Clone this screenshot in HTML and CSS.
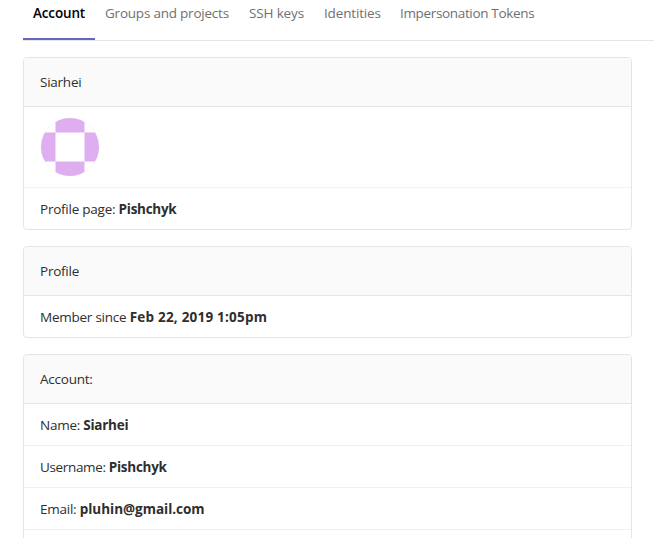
FILE: index.html
```html
<!DOCTYPE html>
<html lang="en">
<head>
<meta charset="utf-8">
<title>Account</title>
<link rel="stylesheet" href="styles.css">
</head>
<body>
<nav class="tabs">
  <a class="tab active">Account</a>
  <a class="tab groups">Groups and projects</a>
  <a class="tab keys">SSH keys</a>
  <a class="tab identities">Identities</a>
  <a class="tab tokens">Impersonation Tokens</a>
</nav>
<main>
  <section class="card">
    <header>Siarhei</header>
    <div class="avatar-row">
      <svg class="avatar" viewBox="0 0 60 60" width="60" height="60">
        <clipPath id="round"><circle cx="30" cy="30" r="29"/></clipPath>
        <circle cx="30" cy="30" r="29" fill="none" stroke="#f7f7f7"/>
        <g clip-path="url(#round)" fill="#deaef0">
          <path d="M15.5 0H44.5V15.5H15.5ZM0 15.5H15.5V44.5H0ZM44.5 15.5H60V44.5H44.5ZM15.5 44.5H44.5V60H15.5Z"/>
        </g>
      </svg>
    </div>
    <div class="row">Profile page: <b>Pishchyk</b></div>
  </section>
  <section class="card">
    <header>Profile</header>
    <div class="row">Member since <b class="date">Feb 22, 2019 1:05pm</b></div>
  </section>
  <section class="card">
    <header>Account:</header>
    <div class="row">Name: <b>Siarhei</b></div>
    <div class="row username">Username: <b>Pishchyk</b></div>
    <div class="row">Email: <b class="email">pluhin@gmail.com</b></div>
    <div class="row"></div>
  </section>
</main>
</body>
</html>
```
FILE: styles.css
```css
* { box-sizing: border-box; }
html { overflow: hidden; }
body { margin: 0; height: 538px; overflow: hidden; background: #fff; color: #2e2e2e; font: 13.5px/20px "Open Sans", "Noto Sans", sans-serif; letter-spacing: -0.24px; }
.tabs { display: flex; height: 41px; margin-left: 23px; border-bottom: 1px solid #e5e5e5; }
.tab { height: 40px; padding: 3px 10px 0; color: #707070; white-space: nowrap; }
.active { width: 72px; color: #000; font-weight: 600; letter-spacing: -0.15px; border-bottom: 2px solid #6666c4; }
.groups { width: 144px; letter-spacing: -0.22px; }
.keys { width: 75px; letter-spacing: -0.15px; }
.identities { width: 76px; letter-spacing: -0.16px; }
.tokens { letter-spacing: -0.34px; }
main { height: 497px; padding: 16px 22px 0 23px; overflow: hidden; }
.card { margin-bottom: 16px; border: 1px solid #e5e5e5; border-radius: 4px; overflow: hidden; }
header { height: 49px; padding: 14px 16px; background: #fafafa; border-bottom: 1px solid #e5e5e5; }
.row { height: 42px; padding: 11px 16px 0; border-bottom: 1px solid #f0f0f0; }
.row:last-child { height: 41px; border-bottom: 0; }
.username { letter-spacing: -0.35px; }
.avatar-row { height: 81px; padding: 10px 16px; border-bottom: 1px solid #f0f0f0; }
.avatar { display: block; }
b { font-weight: 700; letter-spacing: -0.27px; }
.date { letter-spacing: 0.22px; }
.email { letter-spacing: -0.02px; }
```
